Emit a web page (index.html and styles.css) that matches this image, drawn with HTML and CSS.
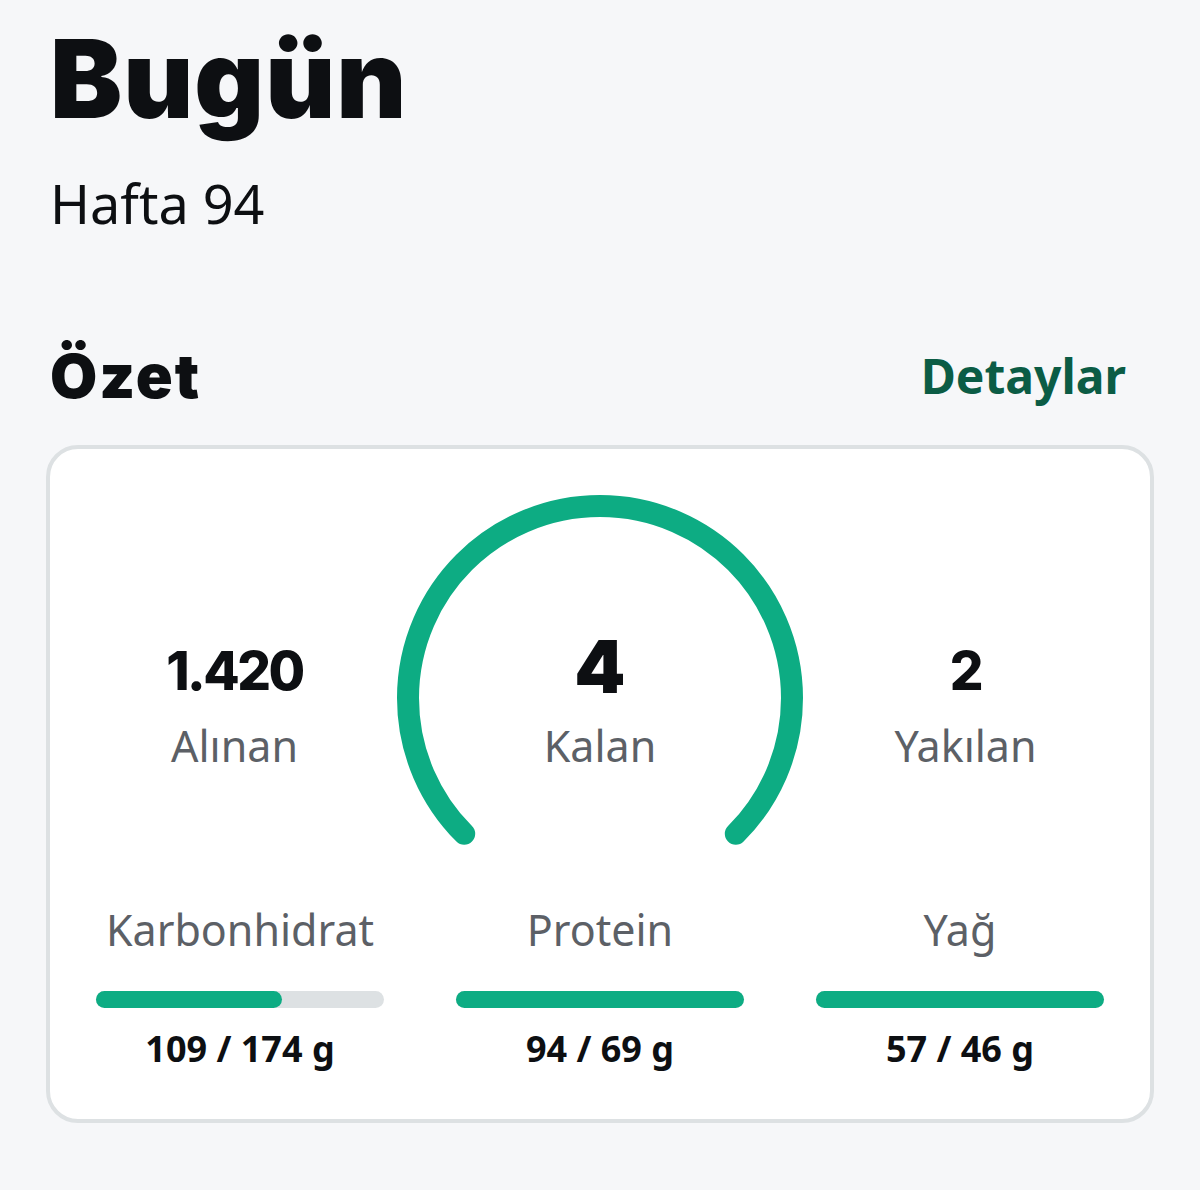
FILE: index.html
```html
<html>
    <head>
        <title>Bugün</title>
        <link rel="stylesheet" href="styles.css">
    </head>
    <body>
        <div class="page">
            <h1 class="title">Bugün</h1>
            <div class="week">Hafta 94</div>

            <div class="section_head">
                <h2 class="section_title">Özet</h2>
                <a class="link" href="#">Detaylar</a>
            </div>

            <div class="card">
                <div class="top_row">
                    <div class="stat side left">
                        <div class="stat_value">1.420</div>
                        <div class="stat_label">Alınan</div>
                    </div>
                    <div class="gauge">
                        <svg class="gauge_arc" width="430" height="364" viewBox="0 0 430 364">
                            <path d="M79.2 350.8 A192 192 0 1 1 350.8 350.8" fill="none" stroke="#0dac83" stroke-width="22" stroke-linecap="round" />
                        </svg>
                        <div class="stat center">
                            <div class="stat_value big">4</div>
                            <div class="stat_label">Kalan</div>
                        </div>
                    </div>
                    <div class="stat side right">
                        <div class="stat_value">2</div>
                        <div class="stat_label">Yakılan</div>
                    </div>
                </div>

                <div class="macros">
                    <div class="macro">
                        <div class="macro_label">Karbonhidrat</div>
                        <div class="bar"><div class="bar_fill" style="width: 64.5%"></div></div>
                        <div class="macro_value">109 / 174 g</div>
                    </div>
                    <div class="macro">
                        <div class="macro_label">Protein</div>
                        <div class="bar"><div class="bar_fill" style="width: 100%"></div></div>
                        <div class="macro_value">94 / 69 g</div>
                    </div>
                    <div class="macro">
                        <div class="macro_label">Yağ</div>
                        <div class="bar"><div class="bar_fill" style="width: 100%"></div></div>
                        <div class="macro_value">57 / 46 g</div>
                    </div>
                </div>
            </div>
        </div>
    </body>
</html>
```

FILE: styles.css
```css
body {
    margin: 0;
    background: #f6f7f9;
    color: #0d0f12;
    font-family: "Noto Sans", "Open Sans", sans-serif;
}

.page {
    padding-top: 19px;
}

.title {
    margin: 0;
    padding-left: 50px;
    font-family: Inter, sans-serif;
    font-weight: 900;
    font-size: 108px;
    line-height: 120px;
    letter-spacing: 1px;
}

.week {
    margin-top: 32px;
    padding-left: 50px;
    font-size: 54px;
    line-height: 64px;
}

.section_head {
    display: flex;
    justify-content: space-between;
    align-items: center;
    margin-top: 106px;
    padding: 0 74px 0 50px;
}

.section_title {
    margin: 0;
    font-family: Inter, sans-serif;
    font-weight: 900;
    font-size: 61px;
    line-height: 70px;
    letter-spacing: 2px;
}

.link {
    color: #0b5c45;
    font-weight: 700;
    font-size: 48px;
    line-height: 70px;
    text-decoration: none;
}

.card {
    margin: 34px 46px 0 46px;
    padding: 34px 46px 47px 46px;
    background: #fff;
    border: 4px solid #dde1e3;
    border-radius: 32px;
}

.top_row {
    display: grid;
    grid-template-columns: 1fr 430px 1fr;
}

.stat {
    display: flex;
    flex-direction: column;
    align-items: center;
}

.side {
    padding-top: 157px;
}

.left {
    padding-right: 12px;
}

.right {
    padding-left: 12px;
}

.stat_value {
    font-family: Inter, sans-serif;
    font-weight: 800;
    font-size: 53px;
    line-height: 63px;
    letter-spacing: -2.5px;
}

.stat_value.big {
    font-weight: 900;
    font-size: 73px;
    line-height: 80px;
    letter-spacing: 0;
}

.stat_label {
    margin-top: 15px;
    color: #5c6066;
    font-size: 43px;
    line-height: 56px;
}

.big + .stat_label {
    margin-top: 11px;
}

.gauge {
    display: grid;
}

.gauge_arc,
.center {
    grid-area: 1 / 1;
}

.center {
    padding-top: 144px;
}

.macros {
    display: grid;
    grid-template-columns: 1fr 1fr 1fr;
    column-gap: 72px;
    margin-top: 55px;
}

.macro {
    display: flex;
    flex-direction: column;
    align-items: center;
}

.macro_label {
    color: #5c6066;
    font-size: 43px;
    line-height: 56px;
}

.bar {
    align-self: stretch;
    margin-top: 33px;
    height: 17px;
    border-radius: 9px;
    background: #dde1e3;
}

.bar_fill {
    height: 100%;
    border-radius: 9px;
    background: #0dac83;
}

.macro_value {
    margin-top: 18px;
    font-weight: 700;
    font-size: 36px;
    line-height: 46px;
}
```
